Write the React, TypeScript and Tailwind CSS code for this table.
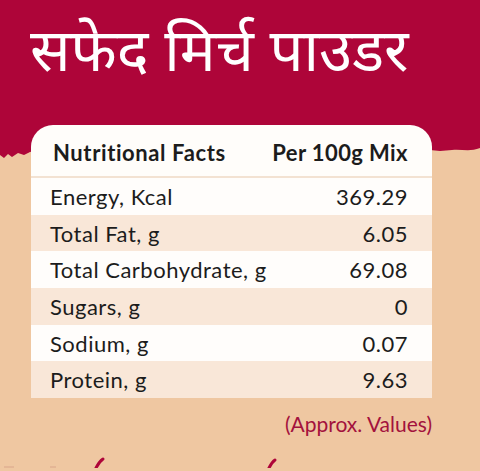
import React from "react";

const rows = [
  { label: "Energy, Kcal", value: "369.29" },
  { label: "Total Fat, g", value: "6.05" },
  { label: "Total Carbohydrate, g", value: "69.08" },
  { label: "Sugars, g", value: "0" },
  { label: "Sodium, g", value: "0.07" },
  { label: "Protein, g", value: "9.63" },
];

function RaggedEdge() {
  return (
    <svg className="block w-full h-[14px]" viewBox="0 0 480 14" preserveAspectRatio="none">
      <path
        d="M0 0 H480 V2 C470 6 462 3 452 4 L440 5 L430 4 L40 4 L30 6 L24 9 L18 7 L12 11 L8 8 L4 12 L0 9 Z"
        fill="#ae0539"
      />
    </svg>
  );
}

export default function App() {
  return (
    <div
      className="w-[480px] h-[471px] overflow-hidden bg-[#efc7a1]"
      style={{ fontFamily: "Lato, 'Open Sans', sans-serif" }}
    >
      {/* Title band */}
      <div className="bg-[#ae0539] h-[146px] pl-[30px] pt-[8px]">
        <h1
          className="text-white text-[60px] leading-[80px] font-normal"
          style={{ fontFamily: "'Noto Sans', 'Noto Sans Devanagari', sans-serif" }}
        >
          सफेद मिर्च पाउडर
        </h1>
      </div>
      <RaggedEdge />

      {/* Facts card */}
      <div className="relative mx-[31px] w-[401px] -mt-[35px]">
        <div className="bg-[#fffdfa] rounded-t-[22px] h-[53px] flex items-center justify-between pl-[22px] pr-[24px] pt-[4px] border-b-2 border-[#f3e2d2]">
          <span className="text-[22px] font-bold text-[#1c1c1c] tracking-[0.6px]">Nutritional Facts</span>
          <span className="text-[22px] font-bold text-[#1c1c1c] tracking-[0.4px]">Per 100g Mix</span>
        </div>
        {rows.map((r, i) => (
          <div
            key={r.label}
            className={`h-[36.7px] flex items-center justify-between pl-[19px] pr-[24px] text-[22px] tracking-[0.5px] text-[#1c1c1c] ${
              i % 2 === 0 ? "bg-[#fffdfb]" : "bg-[#f9e7d8]"
            }`}
          >
            <span>{r.label}</span>
            <span>{r.value}</span>
          </div>
        ))}
      </div>

      <div className="w-[432px] text-right mt-[12px] text-[21px] leading-[28px] text-[#a3123d]">(Approx. Values)</div>

      {/* Peek of next heading */}
      <svg className="block mt-[18px]" width="480" height="12" viewBox="0 0 480 12">
        <path d="M96 12 C98 8 100 5 103 3" stroke="#ae0539" strokeWidth="3" fill="none" strokeLinecap="round" />
        <path d="M269 12 C271 8 272 6 275 4" stroke="#ae0539" strokeWidth="3" fill="none" strokeLinecap="round" />
        <path d="M4 11 L14 11" stroke="#d9a58a" strokeWidth="1" />
        <path d="M50 11 L56 11" stroke="#d9a58a" strokeWidth="1" />
      </svg>
    </div>
  );
}
